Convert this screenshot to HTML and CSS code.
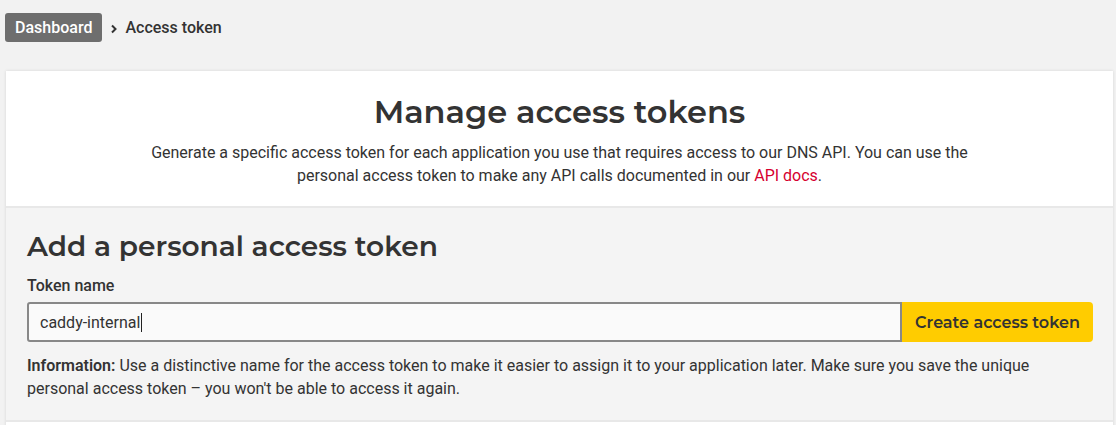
FILE: index.html
```html
<!DOCTYPE html>
<html lang="en">
<head>
<meta charset="utf-8">
<title>Access token</title>
<link rel="stylesheet" href="styles.css">
</head>
<body>
<nav class="crumbs">
  <a class="crumb-home" href="#">Dashboard</a>
  <svg class="crumb-sep" width="8" height="10" viewBox="0 0 8 10"><path d="M2 1.5 L5.5 5 L2 8.5" fill="none" stroke="#333" stroke-width="2"/></svg>
  <span class="crumb-current">Access token</span>
</nav>
<main class="card">
  <section class="intro">
    <h1 class="title">Manage access tokens</h1>
    <p class="lead">Generate a specific access token for each application you use that requires access to our DNS API. You can use the personal access token to make any API calls documented in our <a class="link" href="#">API docs</a>.</p>
  </section>
  <section class="add">
    <h2 class="subtitle">Add a personal access token</h2>
    <label class="label" for="tn">Token name</label>
    <div class="field-row">
      <div class="input" id="tn"><span class="value">caddy-internal</span><span class="caret"></span></div>
      <button class="btn" type="button">Create access token</button>
    </div>
    <p class="info"><strong>Information:</strong> Use a distinctive name for the access token to make it easier to assign it to your application later. Make sure you save the unique personal access token – you won't be able to access it again.</p>
  </section>
  <section class="next"></section>
</main>
</body>
</html>
```
FILE: styles.css
```css
html, body { margin: 0; padding: 0; }
body {
  background: #f2f2f2;
  font-family: Roboto, "Liberation Sans", sans-serif;
  color: #333;
  padding: 13px 3px 0 6px;
  height: 412px;
  overflow: hidden;
}
.crumbs {
  display: flex;
  align-items: center;
  height: 29px;
}
.crumb-home {
  display: block;
  background: #6e6e6e;
  color: #fff;
  text-decoration: none;
  font-weight: 500;
  font-size: 16px;
  line-height: 29px;
  padding: 0 10px;
  border-radius: 3px;
  margin-left: -1px;
}
.crumb-sep { margin: 2px 7px 0 8px; }
.crumb-current { font-size: 16px; font-weight: 500; color: #333; }

.card {
  margin-top: 29px;
  box-shadow: 0 0 3px rgba(0,0,0,0.12);
  background: #f4f4f4;
}
.intro {
  background: #fff;
  text-align: center;
  padding: 21px 0 19px;
  border-bottom: 2px solid #e8e8e8;
}
.title {
  margin: 0;
  font-family: Montserrat, Inter, "Open Sans", sans-serif;
  font-weight: 600;
  font-size: 32px;
  line-height: 40px;
  color: #333;
}
.lead {
  margin: 9px auto 0;
  max-width: 830px;
  font-size: 16px;
  line-height: 23px;
}
.link { color: #d6002f; text-decoration: none; }
.add {
  padding: 21px 20px 20px 21px;
  border-bottom: 2px solid #e8e8e8;
}
.subtitle {
  margin: 0;
  font-family: Montserrat, Inter, "Open Sans", sans-serif;
  font-weight: 600;
  font-size: 28px;
  line-height: 34px;
  color: #333;
}
.label {
  display: block;
  margin-top: 13px;
  font-size: 16px;
  font-weight: 500;
  line-height: 20px;
}
.field-row {
  display: flex;
  margin-top: 6px;
  height: 40px;
}
.input {
  flex: 1;
  display: flex;
  align-items: center;
  box-sizing: border-box;
  border: 2px solid #888;
  border-radius: 3px 0 0 3px;
  background: #fafafa;
  padding-left: 11px;
  font-size: 16px;
  color: #333;
}
.caret { width: 1px; height: 19px; background: #222; margin-left: 1px; }
.btn {
  width: 191px;
  border: 0;
  background: #ffcc00;
  border-radius: 0 4px 4px 0;
  font-family: Montserrat, Inter, "Open Sans", sans-serif;
  font-weight: 600;
  font-size: 16px;
  color: #333;
  padding: 0;
}
.info {
  margin: 12px 0 0;
  font-size: 16px;
  line-height: 23px;
  max-width: 1020px;
}
.info strong { font-weight: 600; }
.next { background: #fff; height: 40px; }
```
